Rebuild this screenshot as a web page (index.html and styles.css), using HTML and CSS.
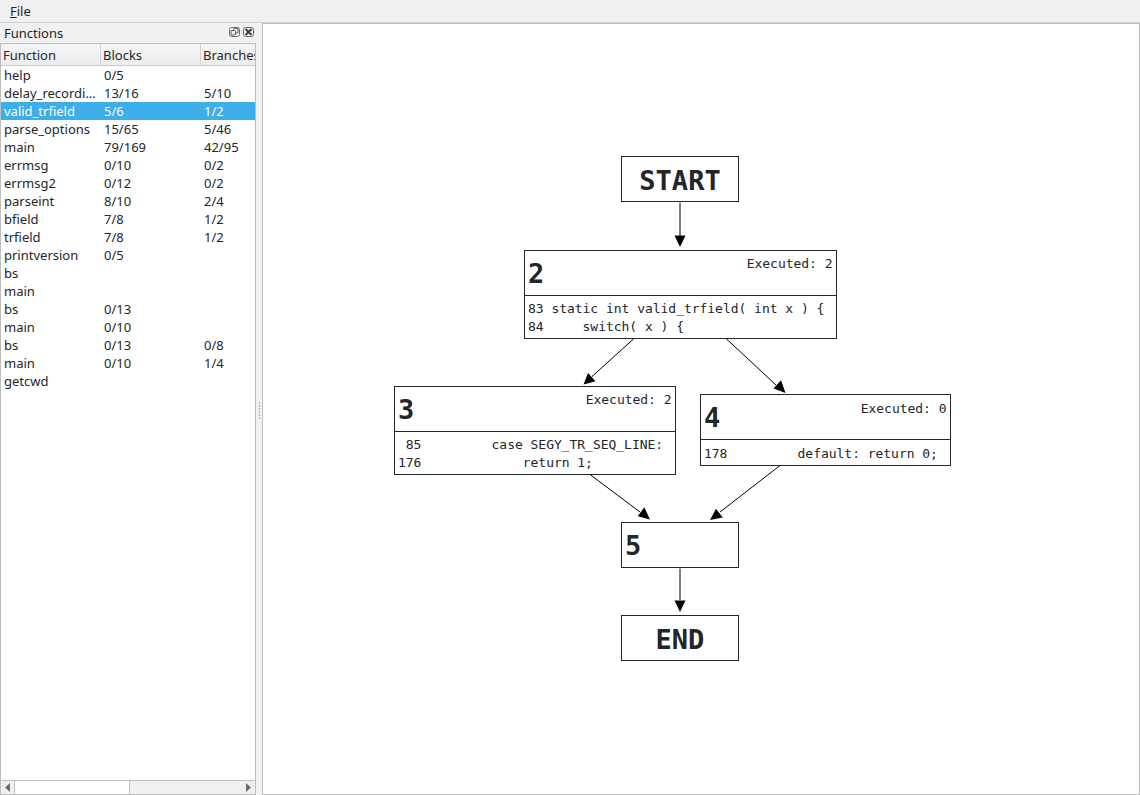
FILE: index.html
```html
<!DOCTYPE html>
<html lang="en">
<head>
<meta charset="utf-8">
<title>Functions</title>
<link rel="stylesheet" href="styles.css">
</head>
<body>
<div class="app">
  <div class="menubar"><span class="menu-item"><u>F</u>ile</span></div>
  <div class="workspace">
    <aside class="dock">
      <div class="dock-title">
        <span class="dock-name">Functions</span>
        <svg class="dock-btn" viewBox="0 0 11 10"><rect x=".5" y=".5" width="10" height="9" rx="2" fill="none" stroke="#6a6c6e"/><rect x="4.500" y="1.500" width="4.500" height="4.500" rx="1" fill="none" stroke="#555"/><rect x="2" y="3.500" width="4.500" height="4.500" rx="1" fill="#eff0f1" stroke="#555"/></svg>
        <svg class="dock-btn" viewBox="0 0 11 10"><rect x=".5" y=".5" width="10" height="9" rx="2" fill="none" stroke="#6a6c6e"/><path d="M2.500 2l6 6M8.500 2l-6 6" stroke="#3c3e40" stroke-width="2"/></svg>
      </div>
      <div class="table-frame">
        <div class="table-head">
          <div class="th">Function</div><div class="th">Blocks</div><div class="th th-last">Branches</div>
        </div>
        <div class="table-body">
          <div class="row"><span class="cell">help</span><span class="cell">0/5</span><span class="cell"></span></div>
          <div class="row"><span class="cell">delay_recordi...</span><span class="cell">13/16</span><span class="cell">5/10</span></div>
          <div class="row selected"><span class="cell">valid_trfield</span><span class="cell">5/6</span><span class="cell">1/2</span></div>
          <div class="row"><span class="cell">parse_options</span><span class="cell">15/65</span><span class="cell">5/46</span></div>
          <div class="row"><span class="cell">main</span><span class="cell">79/169</span><span class="cell">42/95</span></div>
          <div class="row"><span class="cell">errmsg</span><span class="cell">0/10</span><span class="cell">0/2</span></div>
          <div class="row"><span class="cell">errmsg2</span><span class="cell">0/12</span><span class="cell">0/2</span></div>
          <div class="row"><span class="cell">parseint</span><span class="cell">8/10</span><span class="cell">2/4</span></div>
          <div class="row"><span class="cell">bfield</span><span class="cell">7/8</span><span class="cell">1/2</span></div>
          <div class="row"><span class="cell">trfield</span><span class="cell">7/8</span><span class="cell">1/2</span></div>
          <div class="row"><span class="cell">printversion</span><span class="cell">0/5</span><span class="cell"></span></div>
          <div class="row"><span class="cell">bs</span><span class="cell"></span><span class="cell"></span></div>
          <div class="row"><span class="cell">main</span><span class="cell"></span><span class="cell"></span></div>
          <div class="row"><span class="cell">bs</span><span class="cell">0/13</span><span class="cell"></span></div>
          <div class="row"><span class="cell">main</span><span class="cell">0/10</span><span class="cell"></span></div>
          <div class="row"><span class="cell">bs</span><span class="cell">0/13</span><span class="cell">0/8</span></div>
          <div class="row"><span class="cell">main</span><span class="cell">0/10</span><span class="cell">1/4</span></div>
          <div class="row"><span class="cell">getcwd</span><span class="cell"></span><span class="cell"></span></div>
        </div>
        <div class="hscroll">
          <div class="sb-btn"><svg class="sb-arrow" viewBox="0 0 5 9"><path d="M5 0v9L0 4.500z" fill="#6b6e70"/></svg></div>
          <div class="sb-handle"></div>
          <div class="sb-track"></div>
          <div class="sb-btn sb-btn-end"><svg class="sb-arrow" viewBox="0 0 5 9"><path d="M0 0v9l5-4.500z" fill="#6b6e70"/></svg></div>
        </div>
      </div>
    </aside>
    <div class="splitter"><div class="grip"></div></div>
    <main class="canvas">
      <svg class="edges" viewBox="263 24 877 770">
        <g class="edge">
          <path d="M680 202.500V236"/><path class="head" d="M680 247l-5.500-11.500h11z"/>
          <path d="M634 338.500L592 376.500"/><path class="head" d="M583.500 384.500l4.500-11.500 7.500 8.200z"/>
          <path d="M726 338.500L776 385"/><path class="head" d="M785.500 393l-12-4.500 7.500-8.200z"/>
          <path d="M590 474.500L640 512"/><path class="head" d="M650 519.500l-12.300-3.300 6.600-8.900z"/>
          <path d="M780 465.500L720 512"/><path class="head" d="M710 520l6-11.200 6.800 8.700z"/>
          <path d="M680 568.500V600"/><path class="head" d="M680 612l-5.500-11.500h11z"/>
        </g>
      </svg>
      <div class="node node-start"><div class="title-only big">START</div></div>
      <div class="node node-2">
        <div class="node-head"><span class="num">2</span><span class="exec">Executed: 2</span></div>
        <pre class="code">83 static int valid_trfield( int x ) {
84     switch( x ) {</pre>
      </div>
      <div class="node node-3">
        <div class="node-head"><span class="num">3</span><span class="exec">Executed: 2</span></div>
        <pre class="code"> 85         case SEGY_TR_SEQ_LINE:
176             return 1;</pre>
      </div>
      <div class="node node-4">
        <div class="node-head"><span class="num">4</span><span class="exec exec-low">Executed: 0</span></div>
        <pre class="code code-low">178         default: return 0;</pre>
      </div>
      <div class="node node-5"><div class="node-head"><span class="num">5</span></div></div>
      <div class="node node-end"><div class="title-only big">END</div></div>
    </main>
  </div>
</div>
</body>
</html>
```
FILE: styles.css
```css
* { box-sizing: border-box; }
html, body { margin: 0; height: 100%; }
body { font-family: "Noto Sans", sans-serif; font-size: 13px; color: #232629; background: #eff0f1; overflow: hidden; }
.app { display: flex; flex-direction: column; width: 1140px; height: 795px; }
.menubar { height: 23px; flex: none; display: flex; align-items: center; padding-left: 10px; background: #eff0f1; border-bottom: 1px solid #cfd0d1; }
.menu-item { line-height: 22px; }
.workspace { flex: 1; display: flex; min-height: 0; }
.dock { width: 256px; flex: none; display: flex; flex-direction: column; }
.dock-title { height: 20px; flex: none; display: flex; align-items: center; padding: 0 2px 2px 4px; gap: 3px; }
.dock-name { flex: 1; margin-top: 2px; }
.dock-btn { width: 11px; height: 10px; }
.table-frame { flex: 1; display: flex; flex-direction: column; min-height: 0; background: #fff; border: 1px solid #bcbebf; }
.table-head { height: 22px; flex: none; display: grid; grid-template-columns: 100px 100px 1fr; background: linear-gradient(#f4f5f5, #eceded); border-bottom: 1px solid #c9cacb; overflow: hidden; }
.th { padding-left: 2px; line-height: 22px; border-right: 1px solid #d4d5d6; white-space: nowrap; overflow: hidden; }
.th-last { border-right: 0; }
.table-body { flex: 1; min-height: 0; }
.row { height: 18px; display: grid; grid-template-columns: 100px 100px 1fr; line-height: 18px; }
.cell { padding-left: 3px; white-space: nowrap; overflow: hidden; }
.selected { background: #3daee9; color: #fcfcfc; }
.hscroll { height: 14px; flex: none; display: flex; background: #fff; border-top: 1px solid #bcbebf; }
.sb-btn { width: 14px; flex: none; display: flex; align-items: center; justify-content: center; background: #eff0f1; border-right: 1px solid #bcbebf; }
.sb-btn-end { border-right: 0; }
.sb-arrow { width: 5px; height: 9px; }
.sb-handle { width: 115px; flex: none; background: #fff; border-right: 1px solid #bcbebf; }
.sb-track { flex: 1; background: #eff0f1; }
.splitter { width: 6px; flex: none; display: flex; align-items: center; justify-content: center; padding-top: 2px; }
.grip { width: 1px; height: 17px; margin-left: 1px; background: repeating-linear-gradient(#a9abad 0 2px, transparent 2px 3px); }
.canvas { flex: 1; position: relative; background: #fff; border: 1px solid #bcbebf; overflow: hidden; }
.edges { position: absolute; left: 0; top: 0; width: 877px; height: 770px; }
.edge path { fill: none; stroke: #000; stroke-width: 1; }
.edge path.head { fill: #000; stroke: none; }
.node { position: absolute; background: #fff; border: 1px solid #232629; font-family: "DejaVu Sans Mono", monospace; display: flex; flex-direction: column; }
.node-start { left: 358px; top: 132px; width: 118px; height: 46px; }
.node-2 { left: 261px; top: 226px; width: 313px; height: 89px; }
.node-3 { left: 131px; top: 362px; width: 282px; height: 89px; }
.node-4 { left: 437px; top: 370px; width: 251px; height: 72px; }
.node-5 { left: 358px; top: 498px; width: 118px; height: 46px; }
.node-end { left: 358px; top: 591px; width: 118px; height: 46px; }
.title-only { flex: 1; display: flex; align-items: center; justify-content: center; padding-top: 2px; }
.big { font-size: 27px; font-weight: 700; }
.node-head { height: 44px; flex: none; position: relative; padding-left: 3px; display: flex; align-items: flex-start; }
.num { font-size: 27px; font-weight: 700; line-height: 46px; }
.exec { position: absolute; right: 3.500px; top: 4px; font-size: 13px; line-height: 18px; letter-spacing: -0.03px; }
.exec-low { top: 5px; }
.code { flex: 1; margin: 0; padding: 4px 3px 0; border-top: 1px solid #232629; font: 13px/18px "DejaVu Sans Mono", monospace; letter-spacing: -0.03px; white-space: pre; }
.code-low { padding-top: 5px; }
```
